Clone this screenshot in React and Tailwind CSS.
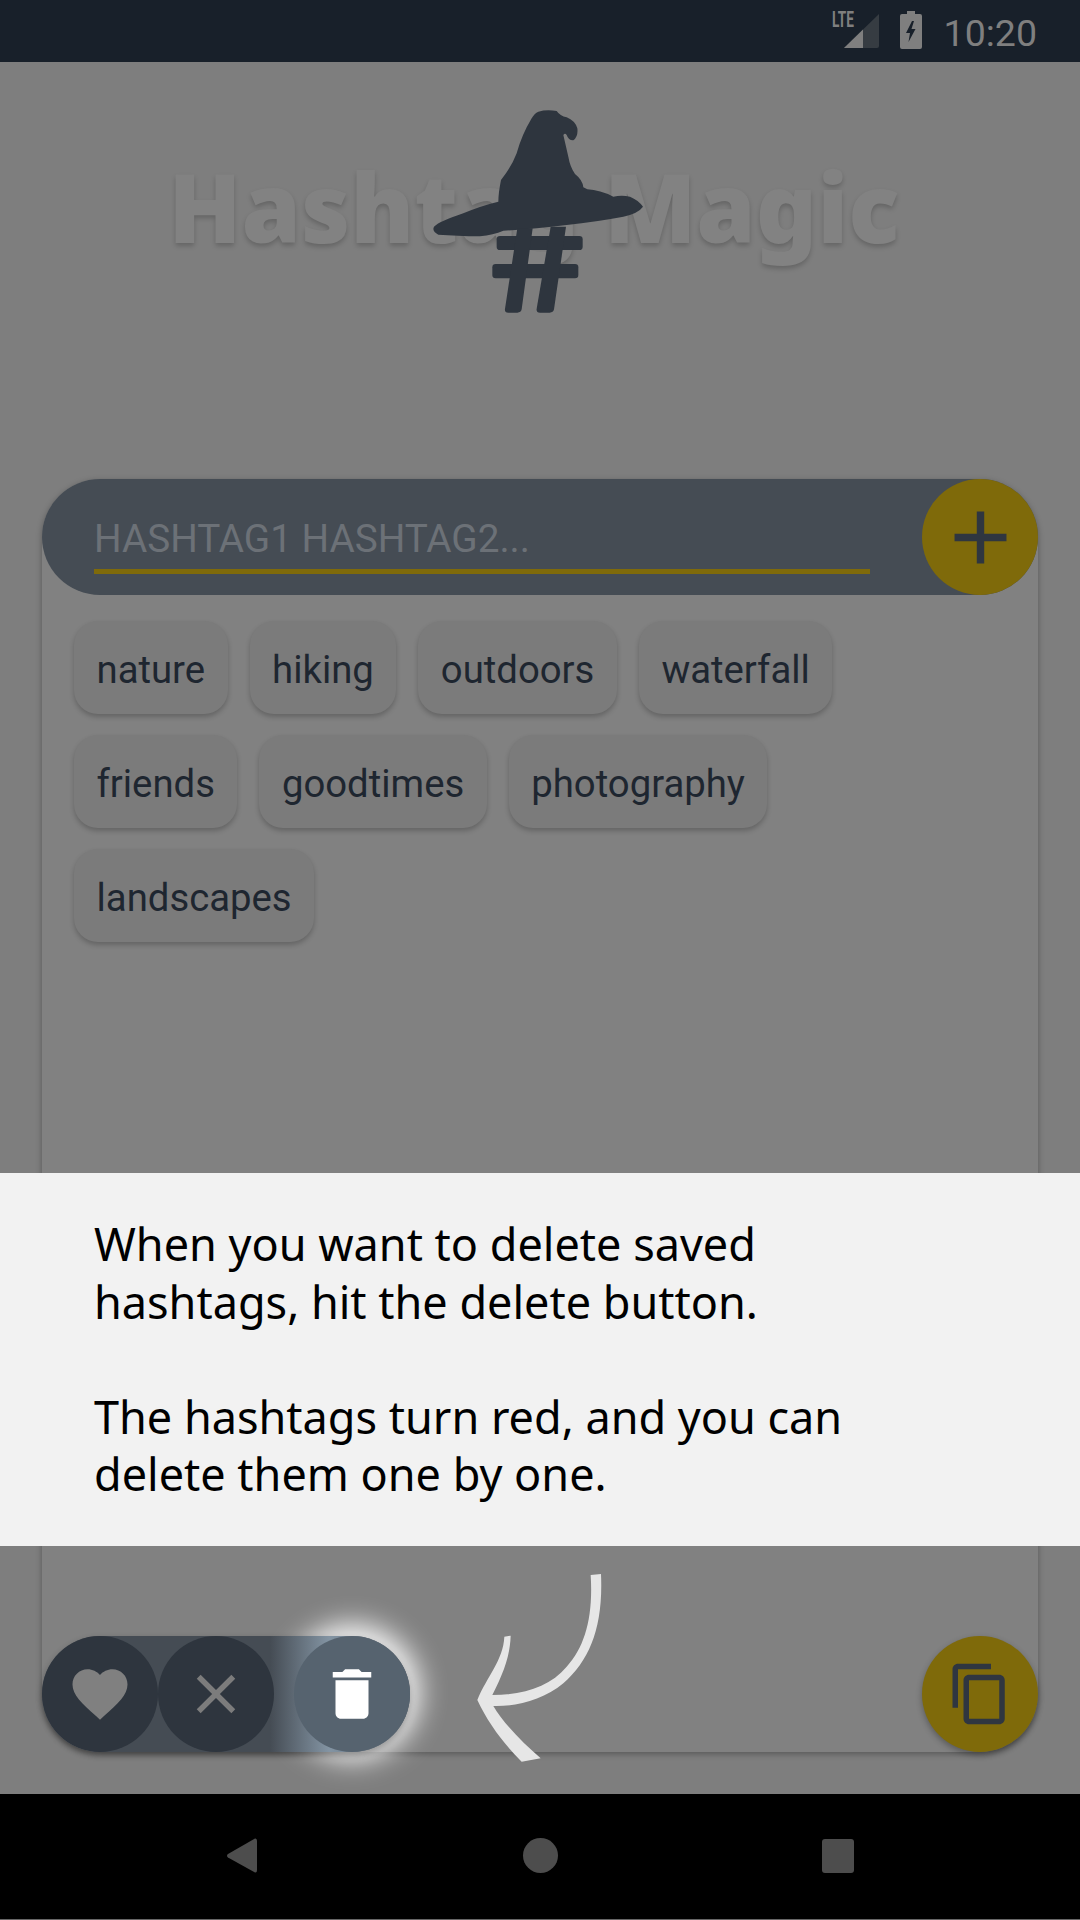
import React from "react";

const tags = ["nature", "hiking", "outdoors", "waterfall", "friends", "goodtimes", "photography", "landscapes"];

function StatusBar() {
    return (
        <div className="h-[62px] shrink-0 bg-[#18202a] flex items-center justify-end pr-[43px] text-[#7f7f7f]">
            <div className="relative w-[48px] h-[36px] mr-[19px] mt-[-2px]">
                <span className="absolute left-[-1px] top-[-5px] origin-left scale-x-[0.62] font-['Roboto',sans-serif] font-bold text-[22px] leading-[26px]">LTE</span>
                <svg width="36" height="36" viewBox="0 0 36 36" className="absolute left-[11px] top-[1px]">
                    <path d="M0 35 L35 1 L35 33 Q35 35 33 35 Z" fill="#363c42" />
                    <path d="M0 35 L19 16.5 L19 35 Z" fill="#7f7f7f" />
                </svg>
            </div>
            <svg width="22" height="38" viewBox="0 0 22 38" className="mr-[22px] mt-[-2px]">
                <path d="M7 0 H15 V3 H20 Q22 3 22 5 V36 Q22 38 20 38 H2 Q0 38 0 36 V5 Q0 3 2 3 H7 Z M12 10 L6 22 H10 L8.5 31 L15.5 18 H11.5 L14 10 Z" fill="#7f7f7f" fillRule="evenodd" />
            </svg>
            <span className="font-['Roboto',sans-serif] text-[37.5px] leading-[44px] mt-[4px]">10:20</span>
        </div>
    );
}

function WizardLogo() {
    return (
        <svg width="260" height="225" viewBox="0 0 780 675" className="absolute left-[400px] top-[38px]" fill="#2e353e">
            <path d="M415 35 Q440 28 470 33 Q480 48 500 52 Q525 62 532 85 Q535 110 520 121 Q506 122 500 105 Q495 98 490 105 Q498 140 505 170 Q510 200 525 222 Q548 240 550 262 L562 268 Q600 270 640 290 Q665 285 690 290 Q715 300 729 320 Q715 340 670 350 Q590 365 500 375 Q400 388 310 392 Q280 405 240 409 Q170 408 115 404 Q95 395 102 380 Q120 363 190 340 Q240 318 295 305 Q295 280 303 240 Q335 200 350 160 Q365 105 395 55 Q403 40 415 35 Z" />
            <rect x="290" y="408" width="258" height="42" rx="10" />
            <rect x="277" y="492" width="258" height="43" rx="10" />
            <path d="M352 385 H398 L365 628 Q363 638 352 638 H325 Q313 638 315 626 Z" />
            <path d="M452 380 H498 L462 628 Q460 638 449 638 H420 Q408 638 410 626 Z" />
        </svg>
    );
}

function Arrow() {
    return (
        <svg width="160" height="215" viewBox="0 0 480 645" className="absolute left-[460px] top-[1498px]" fill="#e6e6e6">
            <path d="M392 45 L423 42 C430 200 390 300 310 370 C250 420 170 440 100 438 C130 490 190 550 242 595 L185 605 C130 550 85 490 52 420 C80 350 130 300 133 230 L152 227 C150 290 130 340 97 405 C190 405 270 380 320 320 C375 260 400 170 392 45 Z" />
        </svg>
    );
}

function Icon({ d, color, size = 66 }) {
    return (
        <svg width={size} height={size} viewBox="0 0 24 24" fill={color}>
            <path d={d} />
        </svg>
    );
}

export default function App() {
    return (
        <div className="w-[1080px] h-[1920px] flex flex-col overflow-hidden bg-[#7e7e7e]">
            <StatusBar />

            <div className="relative flex-1 flex flex-col min-h-0">
                <div className="h-[417px] shrink-0 flex justify-center pt-[84px] pr-[12px]">
                    <h1 className="font-['Noto_Sans',sans-serif] font-black text-[95.5px] leading-[120px] whitespace-nowrap text-[#828282] [text-shadow:0_3px_5px_rgba(0,0,0,0.2)]">
                        Hashtag Magic
                    </h1>
                </div>
                <WizardLogo />

                <div className="flex-1 mx-[42px] mb-[42px] rounded-[58px] bg-[#818181] shadow-[0_2px_6px_rgba(0,0,0,0.3)] flex flex-col justify-between">
                    <div>
                        <div className="h-[116px] rounded-full bg-[#454c54] flex items-center pl-[52px]">
                            <div className="w-[776px] h-[76px] mt-[-2px] border-b-[5px] border-[#7f6a0a] flex items-end pb-[6px]">
                                <span className="font-['Roboto',sans-serif] text-[38.7px] leading-[48px] text-[#6c7177]">HASHTAG1 HASHTAG2...</span>
                            </div>
                            <div className="ml-auto w-[116px] h-[116px] rounded-full bg-[#7f6a0a] flex items-center justify-center">
                                <Icon size={89} color="#2f3640" d="M19 13h-6v6h-2v-6H5v-2h6V5h2v6h6v2z" />
                            </div>
                        </div>

                        <div className="flex flex-wrap gap-x-[22px] gap-y-[21px] pt-[26px] px-[32px]">
                            {tags.map((tag) => (
                                <div key={tag} className="h-[93px] px-[22.5px] pt-[5px] rounded-[24px] bg-[#7b7b7b] shadow-[0_3px_5px_rgba(0,0,0,0.22)] flex items-center font-['Roboto',sans-serif] text-[38.3px] text-[#1e2630]">
                                    {tag}
                                </div>
                            ))}
                        </div>
                    </div>

                    <div className="flex items-center justify-between">
                        <div className="relative w-[368px] h-[116px]">
                            <div className="absolute right-0 top-0 w-[116px] h-[116px] rounded-full shadow-[0_-2px_28px_10px_rgba(255,255,255,0.95)]"></div>
                            <div className="relative h-full rounded-full bg-[linear-gradient(to_right,#454c54_0%,#454c54_62%,#8394a3_78%,#56636f_100%)] shadow-[0_3px_6px_rgba(0,0,0,0.3)] flex items-center">
                                <div className="w-[116px] h-[116px] rounded-full bg-[#2e353e] flex items-center justify-center">
                                    <Icon color="#808080" d="M12 21.35l-1.45-1.32C5.4 15.36 2 12.28 2 8.5 2 5.42 4.42 3 7.5 3c1.74 0 3.41.81 4.5 2.09C13.09 3.81 14.76 3 16.5 3 19.58 3 22 5.42 22 8.5c0 3.78-3.4 6.86-8.55 11.54L12 21.35z" />
                                </div>
                                <div className="w-[116px] h-[116px] rounded-full bg-[#2e353e] flex items-center justify-center">
                                    <Icon color="#7c7c7c" d="M19 6.41L17.59 5 12 10.59 6.41 5 5 6.41 10.59 12 5 17.59 6.41 19 12 13.41 17.59 19 19 17.59 13.41 12z" />
                                </div>
                                <div className="ml-auto w-[116px] h-[116px] rounded-full bg-[#56636f] flex items-center justify-center">
                                    <Icon color="#ffffff" d="M6 19c0 1.1.9 2 2 2h8c1.1 0 2-.9 2-2V7H6v12zM19 4h-3.5l-1-1h-5l-1 1H5v2h14V4z" />
                                </div>
                            </div>
                        </div>
                        <div className="w-[116px] h-[116px] rounded-full bg-[#7f6a0a] shadow-[0_3px_6px_rgba(0,0,0,0.3)] flex items-center justify-center">
                            <Icon color="#2f3640" d="M16 1H4c-1.1 0-2 .9-2 2v14h2V3h12V1zm3 4H8c-1.1 0-2 .9-2 2v14c0 1.1.9 2 2 2h11c1.1 0 2-.9 2-2V7c0-1.1-.9-2-2-2zm0 16H8V7h11v14z" />
                        </div>
                    </div>
                </div>

                <div className="absolute left-0 right-0 top-[1111px] h-[373px] bg-[#f2f2f2] pt-[42px] pl-[94px] font-['Noto_Sans',sans-serif] text-[45px] leading-[57.5px] text-black">
                    <p>When you want to delete saved</p>
                    <p>hashtags, hit the delete button.</p>
                    <p>&nbsp;</p>
                    <p>The hashtags turn red, and you can</p>
                    <p>delete them one by one.</p>
                </div>

                <Arrow />
            </div>

            <div className="h-[126px] shrink-0 pb-[2px] bg-black border-b border-[#666666] flex items-center justify-center gap-[263px]">
                <div className="w-[35px] flex justify-center">
                    <svg width="30" height="35" viewBox="0 0 30 35" fill="#4d4d4d">
                        <path d="M28 0.5 Q30 0 30 3 V32 Q30 35 28 34.5 L1 19.5 Q-1 17.5 1 16 Z" />
                    </svg>
                </div>
                <div className="w-[35px] h-[35px] rounded-full bg-[#4d4d4d]"></div>
                <div className="w-[35px] flex justify-center">
                    <div className="w-[32px] h-[34px] rounded-[3px] bg-[#4d4d4d]"></div>
                </div>
            </div>
        </div>
    );
}
